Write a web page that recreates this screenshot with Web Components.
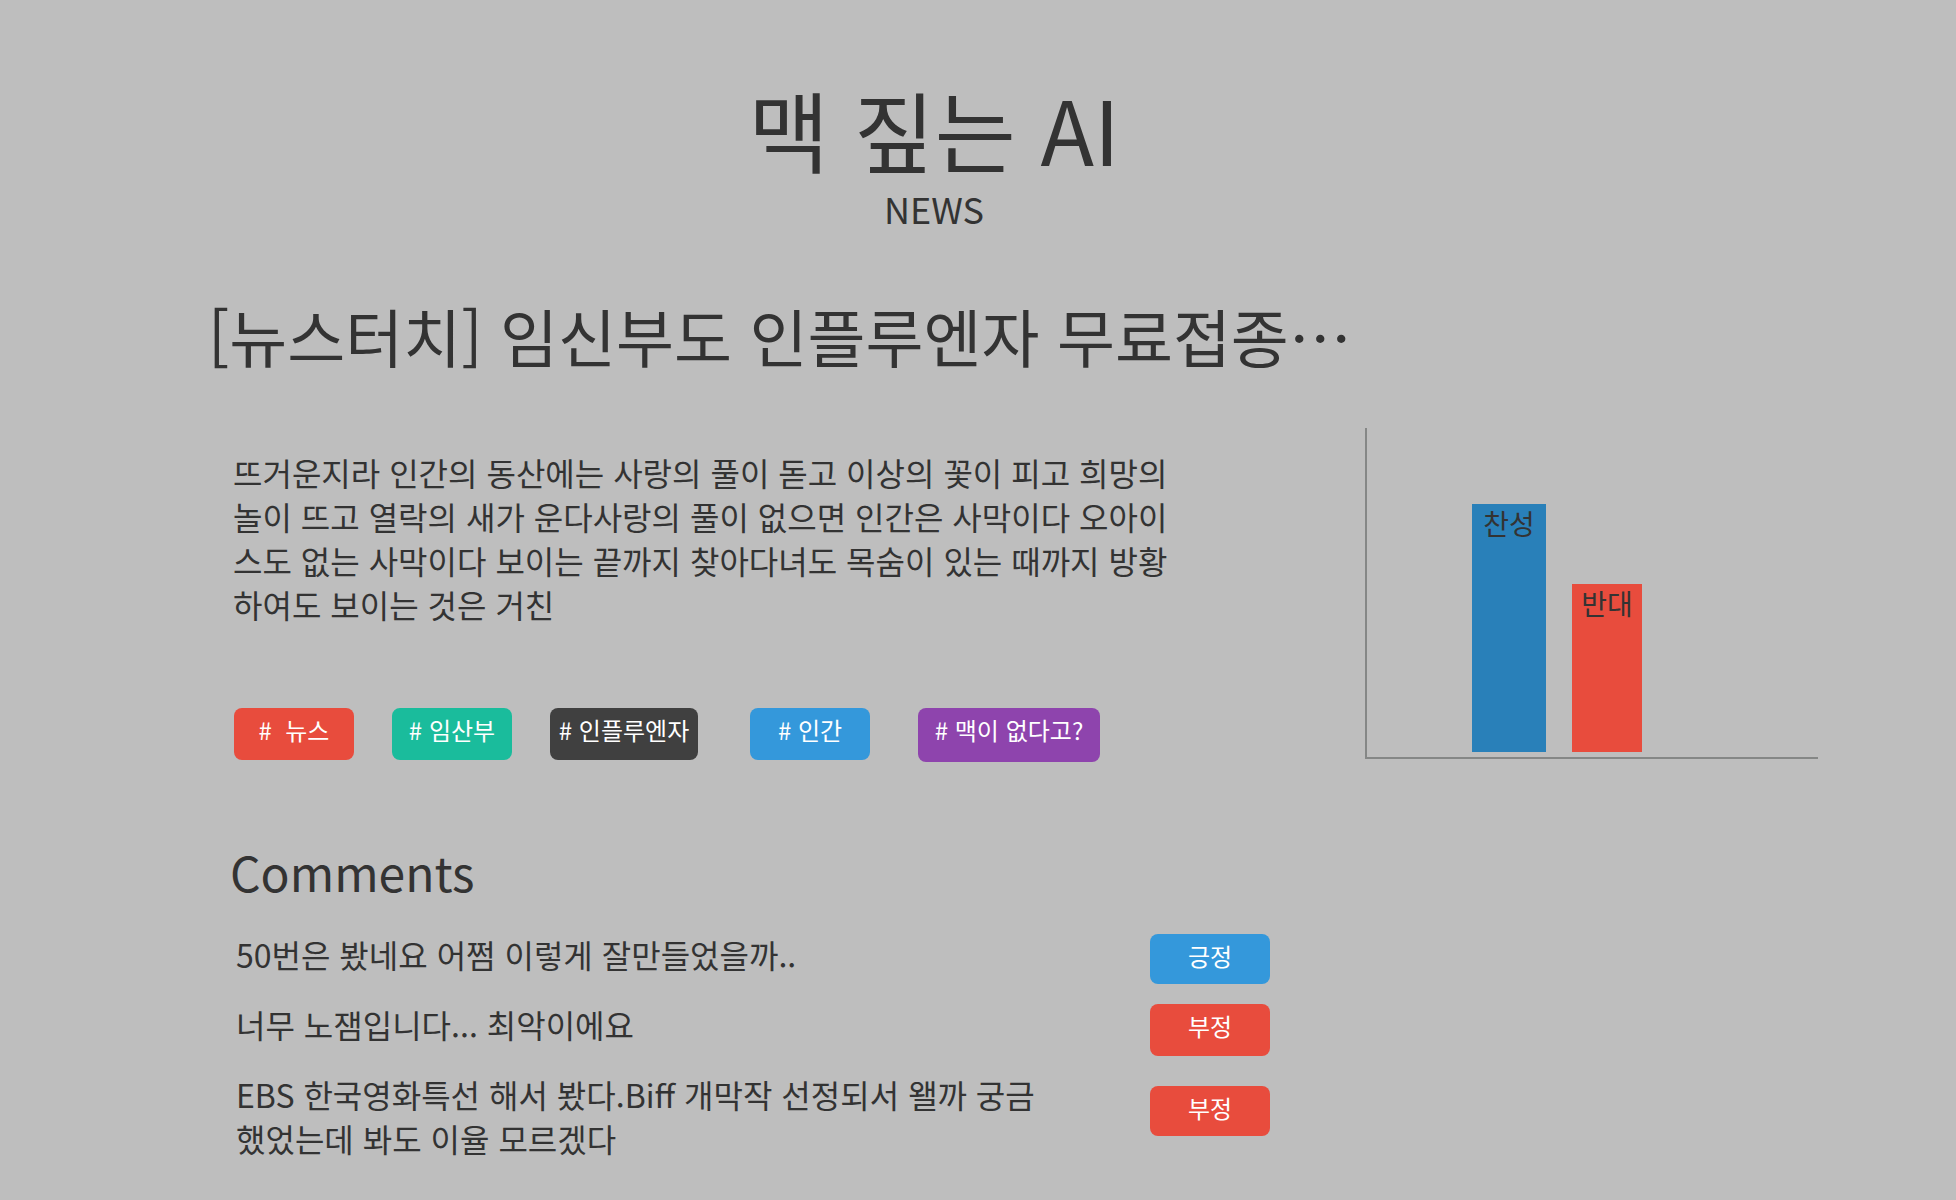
<!DOCTYPE html>
<html lang="ko">
<head>
<meta charset="utf-8">
<meta name="viewport" content="width=device-width, initial-scale=1">
<title>맥 짚는 AI</title>
<style>
  body {
    margin: 0;
    background: #bebebe;
    color: #333;
    font-family: "Noto Sans CJK KR", "Noto Sans", sans-serif;
  }
</style>
</head>
<body>
<news-page>
  <site-header slot="header">맥 짚는 AI<span slot="sub">NEWS</span></site-header>
  <news-headline slot="headline">[뉴스터치] 임신부도 인플루엔자 무료접종…</news-headline>

  <news-summary>뜨거운지라 인간의 동산에는 사랑의 풀이 돋고 이상의 꽃이 피고 희망의 놀이 뜨고 열락의 새가 운다사랑의 풀이 없으면 인간은 사막이다 오아이스도 없는 사막이다 보이는 끝까지 찾아다녀도 목숨이 있는 때까지 방황하여도 보이는 것은 거친</news-summary>

  <tag-list>
    <tag-button style="--fill:#e84c3d">#&nbsp; 뉴스</tag-button>
    <tag-button style="--fill:#1abc9c">#&nbsp;임산부</tag-button>
    <tag-button style="--fill:#404040;--width:148px">#&nbsp;인플루엔자</tag-button>
    <tag-button style="--fill:#3498db;--before:14px">#&nbsp;인간</tag-button>
    <tag-button style="--fill:#8e44ad;--width:182px;--height:54px;--before:10px">#&nbsp;맥이 없다고?</tag-button>
  </tag-list>

  <comment-list>
    <user-comment mood="positive">50번은 봤네요 어쩜 이렇게 잘만들었을까..</user-comment>
    <user-comment mood="negative" style="--height:52px">너무 노잼입니다... 최악이에요</user-comment>
    <user-comment mood="negative" style="--drop:14px">EBS 한국영화특선 해서 봤다.Biff 개막작 선정되서 왤까 궁금했었는데 봐도 이율 모르겠다</user-comment>
  </comment-list>

  <opinion-chart slot="chart">
    <chart-bar style="--fill:#2980b9;--width:74px;--value:248px">찬성</chart-bar>
    <chart-bar style="--fill:#e84c3d;--width:70px;--value:168px">반대</chart-bar>
  </opinion-chart>
</news-page>

<script>
const define = (name, html, setup) => {
  const template = document.createElement('template');
  template.innerHTML = html;
  customElements.define(name, class extends HTMLElement {
    constructor() {
      super();
      this.attachShadow({ mode: 'open' }).append(template.content.cloneNode(true));
    }
    connectedCallback() {
      if (setup) setup(this, this.shadowRoot);
    }
  });
};

define('news-page', `
  <style>
    :host { display: block; min-height: 100vh; box-sizing: border-box; padding: 68px 138px 40px 208px; }
    .columns { display: flex; justify-content: space-between; align-items: flex-start; margin-top: 47px; }
    article { flex: 0 1 1062px; box-sizing: border-box; padding: 22px 0 0 25px; }
  </style>
  <slot name="header"></slot>
  <main>
    <slot name="headline"></slot>
    <div class="columns">
      <article><slot></slot></article>
      <slot name="chart"></slot>
    </div>
  </main>`);

define('site-header', `
  <style>
    :host { display: block; padding-right: 158px; text-align: center; }
    h1 { margin: 0; font-size: 88px; line-height: 120px; font-weight: 400; }
    p { margin: 0; font-size: 36px; line-height: 40px; }
  </style>
  <header><h1><slot></slot></h1><p><slot name="sub"></slot></p></header>`);

define('news-headline', `
  <style>
    :host { display: block; margin-top: 61px; }
    h2 { margin: 0; font-size: 63px; line-height: 92px; font-weight: 400; }
  </style>
  <h2><slot></slot></h2>`);

define('news-summary', `
  <style>
    :host { display: block; max-width: 950px; }
    p { margin: 0; font-size: 32px; line-height: 44px; }
  </style>
  <p><slot></slot></p>`);

define('tag-list', `
  <style>
    :host { display: flex; align-items: flex-start; gap: 38px; margin: 82px 0 0 1px; }
  </style>
  <slot></slot>`);

define('tag-button', `
  <style>
    :host { display: block; margin-left: var(--before, 0); }
    button {
      display: flex; justify-content: center; align-items: flex-start; box-sizing: border-box;
      width: var(--width, 120px); height: var(--height, 52px); padding: 4px 0 0;
      border: 0; border-radius: 8px; background: var(--fill); color: #fff;
      font: inherit; font-size: 24px; line-height: 36px; white-space: nowrap; cursor: pointer;
    }
  </style>
  <button type="button"><slot></slot></button>`);

define('comment-list', `
  <style>
    :host { display: block; margin-top: 74px; }
    h3 { margin: 0 0 26px -3px; font-size: 48px; line-height: 70px; font-weight: 400; }
    .rows { padding-left: 3px; }
  </style>
  <section>
    <h3>Comments</h3>
    <div class="rows"><slot></slot></div>
  </section>`);

define('user-comment', `
  <style>
    :host { display: flex; align-items: flex-start; justify-content: space-between; min-height: 70px; max-width: 1034px; }
    p { flex: 0 1 820px; margin: 0; font-size: 32px; line-height: 44px; }
    .mood {
      flex: none; box-sizing: border-box; width: 120px; height: var(--height, 50px);
      margin-top: var(--drop, 2px); padding-top: 4px; border-radius: 8px;
      background: #e84c3d; color: #fff; font-size: 24px; line-height: 36px; text-align: center;
    }
    :host([mood="positive"]) .mood { background: #3498db; }
  </style>
  <p><slot></slot></p>
  <span class="mood"></span>`,
  (host, root) => {
    root.querySelector('.mood').textContent = host.getAttribute('mood') === 'positive' ? '긍정' : '부정';
  });

define('opinion-chart', `
  <style>
    :host {
      display: flex; flex: 0 0 453px; align-items: flex-end; gap: 26px;
      box-sizing: border-box; height: 331px; padding: 0 0 5px 105px;
      border: solid #858786; border-width: 0 0 2px 2px;
    }
  </style>
  <slot></slot>`);

define('chart-bar', `
  <style>
    :host {
      display: block; box-sizing: border-box; width: var(--width); height: var(--value);
      background: var(--fill); text-align: center; font-size: 28px; line-height: 38px;
    }
  </style>
  <slot></slot>`);
</script>
</body>
</html>
